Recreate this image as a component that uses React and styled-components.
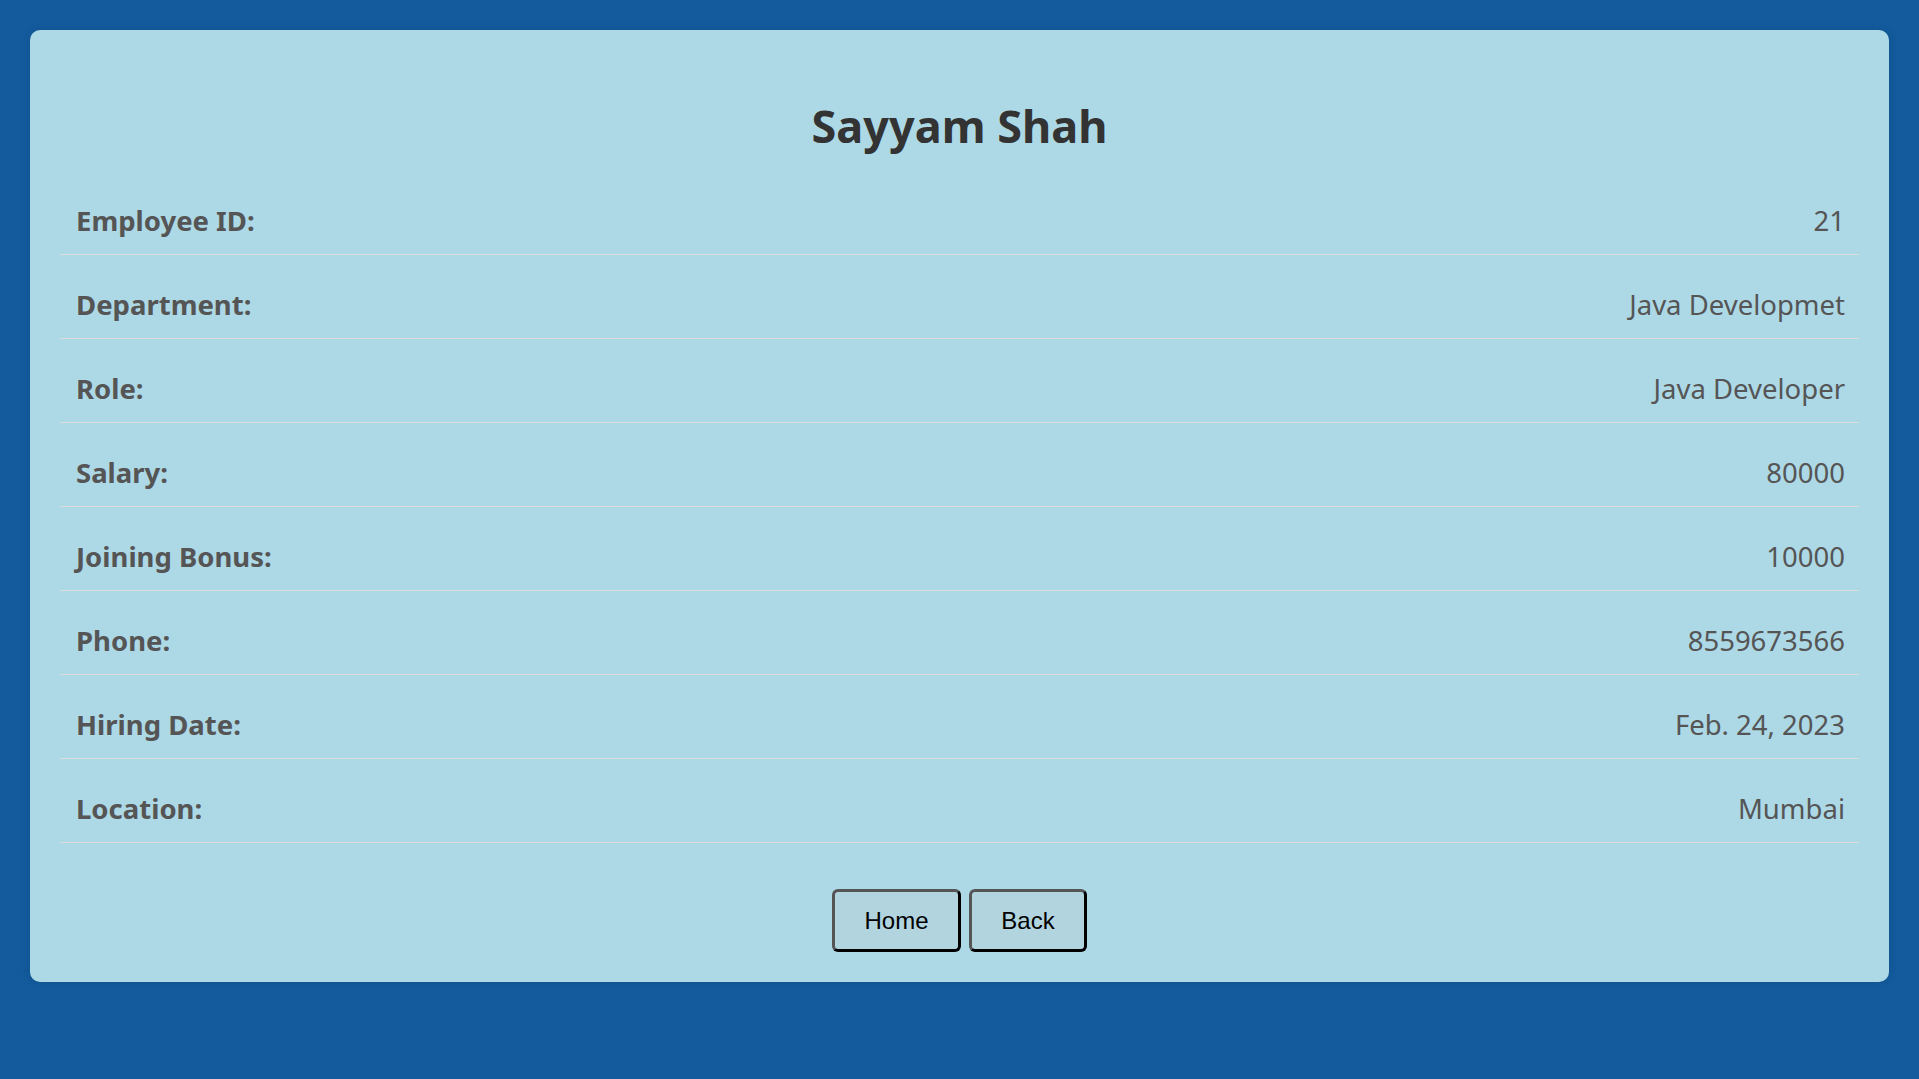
import React from "react";
import styled, { createGlobalStyle } from "styled-components";

const GlobalStyle = createGlobalStyle`
  html, body {
    margin: 0;
    padding: 0;
    background: #135b9d;
  }
  body {
    font-family: "Noto Sans", "Open Sans", sans-serif;
  }
`;

const Page = styled.div`
  padding: 30px 30px 97px;
`;

const Card = styled.div`
  background: #add8e6;
  border-radius: 10px;
  box-shadow: 0 0 10px rgba(0, 0, 0, 0.12);
  padding: 30px;
  display: flex;
  flex-direction: column;
`;

const Title = styled.h1`
  margin: 36px 0 15px;
  font-size: 45px;
  line-height: 60px;
  font-weight: 700;
  color: #333;
  text-align: center;
`;

const Row = styled.div`
  display: flex;
  justify-content: space-between;
  align-items: baseline;
  padding: 30px 14px 13px 16px;
  border-bottom: 1px solid #dcdcdc;
  font-size: 27.5px;
  line-height: 40px;
`;

const Label = styled.span`
  font-weight: 700;
  color: #555;
`;

const Value = styled.span`
  color: #555;
`;

const Actions = styled.div`
  display: flex;
  justify-content: center;
  gap: 8px;
  margin-top: 46px;
`;

const Button = styled.button`
  width: ${(p) => p.$w}px;
  height: 63px;
  padding: 0;
  background: #b1d4df;
  border: 3px solid;
  border-color: #555 #000 #000 #555;
  border-radius: 6px;
  font-family: "Liberation Sans", Arial, sans-serif;
  font-size: 24px;
  color: #000;
  cursor: pointer;
`;

const rows = [
  ["Employee ID:", "21"],
  ["Department:", "Java Developmet"],
  ["Role:", "Java Developer"],
  ["Salary:", "80000"],
  ["Joining Bonus:", "10000"],
  ["Phone:", "8559673566"],
  ["Hiring Date:", "Feb. 24, 2023"],
  ["Location:", "Mumbai"],
];

export default function App() {
  return (
    <>
      <GlobalStyle />
      <Page>
        <Card>
          <Title>Sayyam Shah</Title>
          {rows.map(([l, v]) => (
            <Row key={l}>
              <Label>{l}</Label>
              <Value>{v}</Value>
            </Row>
          ))}
          <Actions>
            <Button $w={129}>Home</Button>
            <Button $w={118}>Back</Button>
          </Actions>
        </Card>
      </Page>
    </>
  );
}
